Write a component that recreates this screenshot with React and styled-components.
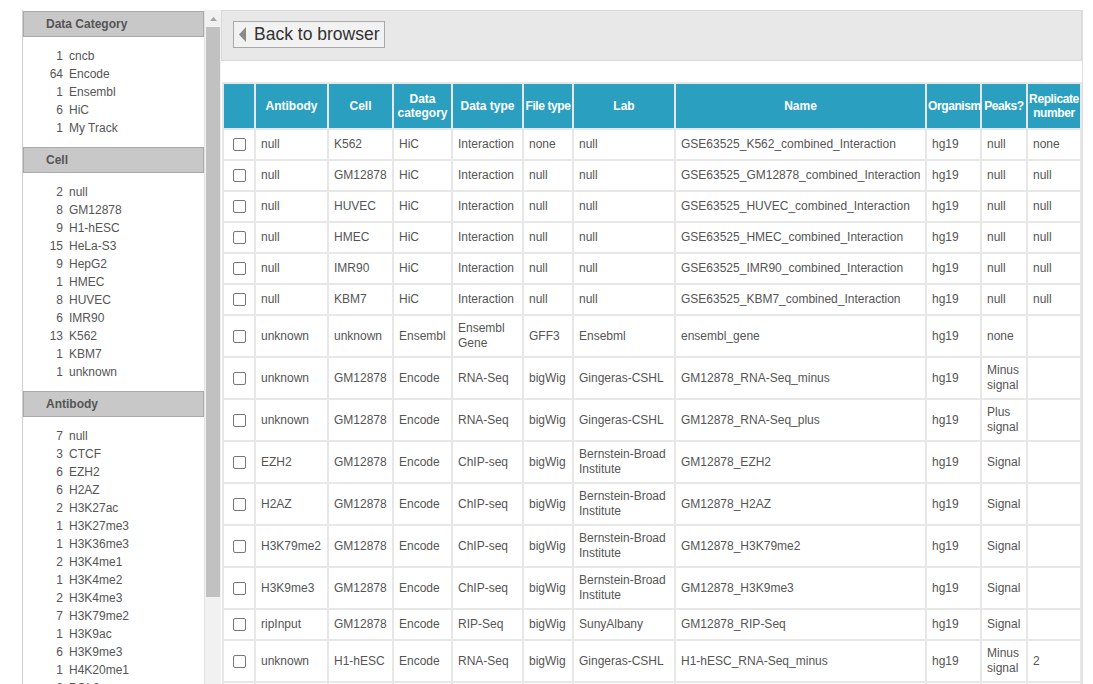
import React from "react";
import styled, { createGlobalStyle } from "styled-components";

const Global = createGlobalStyle`
  html, body { margin: 0; padding: 0; background: #fff; overflow: hidden; }
  body { font-family: "Liberation Sans", Arial, sans-serif; font-size: 12px; color: #555; }
`;

const Page = styled.div`
  display: flex;
  align-items: flex-start;
  padding: 10px 0 0 22px;
  height: 674px;
  overflow: hidden;
`;

const Sidebar = styled.div`
  display: flex;
  width: 199px;
  height: 674px;
  flex: none;
  overflow: hidden;
`;

const FacetList = styled.div`
  width: 182px;
  padding-top: 1px;
  border-left: 1px solid #cfcfcf;
  border-right: 1px solid #e2e2e2;
  overflow: hidden;
`;

const FacetHeader = styled.div`
  height: 24px;
  line-height: 24px;
  background: #c8c8c8;
  border: 1px solid #a9a9a9;
  font-weight: bold;
  color: #555;
  padding-left: 22px;
`;

const FacetItems = styled.ul`
  list-style: none;
  margin: 0;
  padding: 10px 0 10px 0;
`;

const FacetItem = styled.li`
  display: flex;
  height: 18px;
  line-height: 18px;
`;

const Count = styled.span`
  width: 40px;
  text-align: right;
  margin-right: 6px;
`;

const Scrollbar = styled.div`
  width: 16px;
  background: #f1f1f1;
  display: flex;
  flex-direction: column;
  align-items: center;
  flex: none;
`;

const ScrollArrow = styled.div`
  height: 17px;
  display: flex;
  align-items: center;
  justify-content: center;
`;

const ScrollThumb = styled.div`
  width: 14px;
  height: 570px;
  background: #c1c1c1;
`;

const Main = styled.div`
  width: 861px;
  border-right: 1px solid #dedede;
  height: 674px;
  flex: none;
  overflow: hidden;
`;

const Toolbar = styled.div`
  height: 51px;
  background: #e8e8e8;
  border: 1px solid #d9d9d9;
  display: flex;
  align-items: flex-start;
  padding: 10px 0 0 11px;
  box-sizing: border-box;
`;

const BackButton = styled.button`
  display: flex;
  align-items: center;
  gap: 8px;
  height: 27px;
  padding: 0 5px 0 5px;
  background: #f2f2f2;
  border: 1px solid #a8a8a8;
  border-radius: 0;
  font-family: "Liberation Sans", Arial, sans-serif;
  font-size: 17.5px;
  color: #333;
`;

const Spacer = styled.div`
  height: 21px;
`;

const Table = styled.table`
  table-layout: fixed;
  width: 860px;
  border-collapse: separate;
  border-spacing: 2px;
  background: #e7e7e7;
  margin-left: 1px;
`;

const Th = styled.th`
  background: #2b9fc0;
  color: #fff;
  font-weight: bold;
  font-size: 12px;
  line-height: 14px;
  height: 44px;
  padding: 0 1px;
  text-align: center;
  white-space: ${(p) => (p.$nowrap ? "nowrap" : "normal")};
  overflow: visible;
  letter-spacing: ${(p) => (p.$tight ? "-0.4px" : "0")};
`;

const Tr = styled.tr`
  height: 29px;
`;

const Td = styled.td`
  background: #fff;
  padding: 5px 5px;
  line-height: 15px;
  color: #555;
  vertical-align: middle;
  text-align: left;
`;

const CheckCell = styled(Td)`
  padding: 0 0 0 9px;
`;

const Box = styled.span`
  display: block;
  width: 11px;
  height: 11px;
  border: 1px solid #777;
  border-radius: 2px;
  background: #fff;
`;

const facets = [
  {
    title: "Data Category",
    items: [["1", "cncb"], ["64", "Encode"], ["1", "Ensembl"], ["6", "HiC"], ["1", "My Track"]],
  },
  {
    title: "Cell",
    items: [
      ["2", "null"], ["8", "GM12878"], ["9", "H1-hESC"], ["15", "HeLa-S3"], ["9", "HepG2"],
      ["1", "HMEC"], ["8", "HUVEC"], ["6", "IMR90"], ["13", "K562"], ["1", "KBM7"], ["1", "unknown"],
    ],
  },
  {
    title: "Antibody",
    items: [
      ["7", "null"], ["3", "CTCF"], ["6", "EZH2"], ["6", "H2AZ"], ["2", "H3K27ac"], ["1", "H3K27me3"],
      ["1", "H3K36me3"], ["2", "H3K4me1"], ["1", "H3K4me2"], ["2", "H3K4me3"], ["7", "H3K79me2"],
      ["1", "H3K9ac"], ["6", "H3K9me3"], ["1", "H4K20me1"], ["2", "POL2"],
    ],
  },
];

const columns = [
  { w: 30, label: "" },
  { w: 71, label: "Antibody" },
  { w: 63, label: "Cell" },
  { w: 57, label: "Data category" },
  { w: 69, label: "Data type", nowrap: true },
  { w: 48, label: "File type", nowrap: true, tight: true },
  { w: 100, label: "Lab" },
  { w: 249, label: "Name" },
  { w: 53, label: "Organism", nowrap: true, tight: true },
  { w: 44, label: "Peaks?", nowrap: true, tight: true },
  { w: 52, label: "Replicate number", tight: true },
];

const rows = [
  ["null", "K562", "HiC", "Interaction", "none", "null", "GSE63525_K562_combined_Interaction", "hg19", "null", "none"],
  ["null", "GM12878", "HiC", "Interaction", "null", "null", "GSE63525_GM12878_combined_Interaction", "hg19", "null", "null"],
  ["null", "HUVEC", "HiC", "Interaction", "null", "null", "GSE63525_HUVEC_combined_Interaction", "hg19", "null", "null"],
  ["null", "HMEC", "HiC", "Interaction", "null", "null", "GSE63525_HMEC_combined_Interaction", "hg19", "null", "null"],
  ["null", "IMR90", "HiC", "Interaction", "null", "null", "GSE63525_IMR90_combined_Interaction", "hg19", "null", "null"],
  ["null", "KBM7", "HiC", "Interaction", "null", "null", "GSE63525_KBM7_combined_Interaction", "hg19", "null", "null"],
  ["unknown", "unknown", "Ensembl", "Ensembl Gene", "GFF3", "Ensebml", "ensembl_gene", "hg19", "none", ""],
  ["unknown", "GM12878", "Encode", "RNA-Seq", "bigWig", "Gingeras-CSHL", "GM12878_RNA-Seq_minus", "hg19", "Minus signal", ""],
  ["unknown", "GM12878", "Encode", "RNA-Seq", "bigWig", "Gingeras-CSHL", "GM12878_RNA-Seq_plus", "hg19", "Plus signal", ""],
  ["EZH2", "GM12878", "Encode", "ChIP-seq", "bigWig", "Bernstein-Broad Institute", "GM12878_EZH2", "hg19", "Signal", ""],
  ["H2AZ", "GM12878", "Encode", "ChIP-seq", "bigWig", "Bernstein-Broad Institute", "GM12878_H2AZ", "hg19", "Signal", ""],
  ["H3K79me2", "GM12878", "Encode", "ChIP-seq", "bigWig", "Bernstein-Broad Institute", "GM12878_H3K79me2", "hg19", "Signal", ""],
  ["H3K9me3", "GM12878", "Encode", "ChIP-seq", "bigWig", "Bernstein-Broad Institute", "GM12878_H3K9me3", "hg19", "Signal", ""],
  ["ripInput", "GM12878", "Encode", "RIP-Seq", "bigWig", "SunyAlbany", "GM12878_RIP-Seq", "hg19", "Signal", ""],
  ["unknown", "H1-hESC", "Encode", "RNA-Seq", "bigWig", "Gingeras-CSHL", "H1-hESC_RNA-Seq_minus", "hg19", "Minus signal", "2"],
  ["unknown", "H1-hESC", "Encode", "RNA-Seq", "bigWig", "Gingeras-CSHL", "H1-hESC_RNA-Seq_plus", "hg19", "Plus signal", "2"],
];

export default function App() {
  return (
    <>
      <Global />
      <Page>
        <Sidebar>
          <FacetList>
            {facets.map((f) => (
              <div key={f.title}>
                <FacetHeader>{f.title}</FacetHeader>
                <FacetItems>
                  {f.items.map(([c, n]) => (
                    <FacetItem key={n}>
                      <Count>{c}</Count>
                      <span>{n}</span>
                    </FacetItem>
                  ))}
                </FacetItems>
              </div>
            ))}
          </FacetList>
          <Scrollbar>
            <ScrollArrow>
              <svg width="7" height="4" viewBox="0 0 7 4">
                <path d="M0 4 L3.5 0 L7 4 Z" fill="#a3a3a3" />
              </svg>
            </ScrollArrow>
            <ScrollThumb />
          </Scrollbar>
        </Sidebar>
        <Main>
          <Toolbar>
            <BackButton>
              <svg width="7" height="15" viewBox="0 0 7 15">
                <path d="M7 0 L0 7.5 L7 15 Z" fill="#8a8a8a" />
              </svg>
              Back to browser
            </BackButton>
          </Toolbar>
          <Spacer />
          <Table>
            <colgroup>
              {columns.map((c, i) => (
                <col key={i} style={{ width: c.w }} />
              ))}
            </colgroup>
            <thead>
              <tr>
                {columns.map((c, i) => (
                  <Th key={i} $nowrap={c.nowrap} $tight={c.tight}>
                    {c.label}
                  </Th>
                ))}
              </tr>
            </thead>
            <tbody>
              {rows.map((r, i) => (
                <Tr key={i}>
                  <CheckCell>
                    <Box />
                  </CheckCell>
                  {r.map((v, j) => (
                    <Td key={j}>{v}</Td>
                  ))}
                </Tr>
              ))}
            </tbody>
          </Table>
        </Main>
      </Page>
    </>
  );
}
